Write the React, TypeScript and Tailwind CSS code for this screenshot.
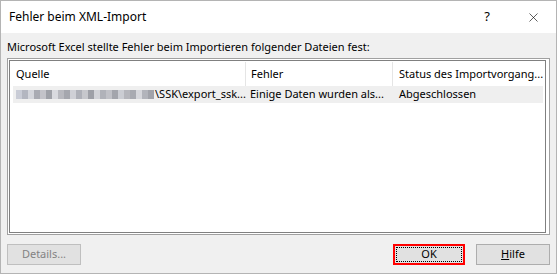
import { X } from "lucide-react";

const blurBlocks = [
  "bg-[#c9ccd6]", "bg-[#b3b6c0]", "bg-[#d4d6dc]", "bg-[#a9abb3]", "bg-[#c3c3c9]", "bg-[#9fa1a8]",
  "bg-[#d9dadf]", "bg-[#b8b9bf]", "bg-[#a5a7ae]", "bg-[#cfd0d6]", "bg-[#aeb0b8]", "bg-[#c6c7cc]",
  "bg-[#9ea0a7]", "bg-[#d2d3d8]", "bg-[#b0b2b9]", "bg-[#c0c1c7]", "bg-[#a3a5ac]", "bg-[#cbcdd3]",
  "bg-[#b5b6bc]", "bg-[#a8aab1]", "bg-[#d6d7dc]", "bg-[#b2b4bb]", "bg-[#a1a3aa]",
];

function BlurredPath() {
  return (
    <span className="flex items-center h-[12px] w-[139px] shrink-0 overflow-hidden blur-[0.6px]">
      {blurBlocks.map((c, i) => (
        <span key={i} className={`${c} h-[9px] w-[6px] shrink-0`} />
      ))}
    </span>
  );
}

export default function App() {
  return (
    <div
      className="w-[557px] h-[274px] flex flex-col border border-[#b4b4b4] bg-[#f0f0f0] text-[11px] text-black whitespace-nowrap"
      style={{ fontFamily: '"Noto Sans", "Liberation Sans", sans-serif' }}
    >
      {/* Title bar */}
      <div className="h-[32px] bg-white flex items-center pl-2 shrink-0 text-[12px]">
        <span className="flex-1">Fehler beim XML-Import</span>
        <span className="w-[46px] text-center text-[13px] ml-[12px]">?</span>
        <span className="w-[46px] flex justify-center">
          <X size={15} strokeWidth={1} />
        </span>
      </div>

      {/* Body */}
      <div className="flex-1 flex flex-col px-[6px] pt-[4px] pb-[8px]">
        <p className="h-[20px] leading-[20px]">
          Microsoft Excel stellte Fehler beim Importieren folgender Dateien fest:
        </p>

        {/* List view */}
        <div className="mt-[1px] h-[177px] border border-[#a0a0a0] bg-white pl-[1px] pt-[1px] pr-[3px] pb-[1px] flex">
          <div className="flex-1 border border-[#808080] bg-white pl-[3px] pt-[1px] overflow-hidden">
            <div className="flex h-[24px] items-center">
              <div className="w-[232px] pl-[3px]">Quelle</div>
              <div className="h-full border-l border-[#e5e5e5]" />
              <div className="w-[146px] pl-[5px]">Fehler</div>
              <div className="h-full border-l border-[#e5e5e5]" />
              <div className="flex-1 pl-[6px]">Status des Importvorgang...</div>
            </div>
            <div className="flex h-[17px] items-center bg-[#efefef] mr-[2px]">
              <div className="w-[233px] pl-[3px] flex items-center">
                <BlurredPath />
                <span>\SSK\export_ssk...</span>
              </div>
              <div className="w-[147px] pl-[4px]">Einige Daten wurden als...</div>
              <div className="flex-1 pl-[6px]">Abgeschlossen</div>
            </div>
          </div>
        </div>

        {/* Buttons */}
        <div className="mt-auto flex items-center h-[21px]">
          <button className="w-[74px] h-[21px] border border-[#bfbfbf] bg-[#e1e1e1] text-[#838383]">
            Details...
          </button>
          <div className="flex-1" />
          <button className="w-[72px] h-[21px] border-2 border-[#ff0000] bg-[#e1e1e1] p-[1px]">
            <span className="flex h-full w-full items-center justify-center border border-dotted border-black">
              OK
            </span>
          </button>
          <button className="ml-[11px] w-[74px] h-[21px] border border-[#adadad] bg-[#e1e1e1]">
            <span className="underline">H</span>ilfe
          </button>
        </div>
      </div>
    </div>
  );
}
